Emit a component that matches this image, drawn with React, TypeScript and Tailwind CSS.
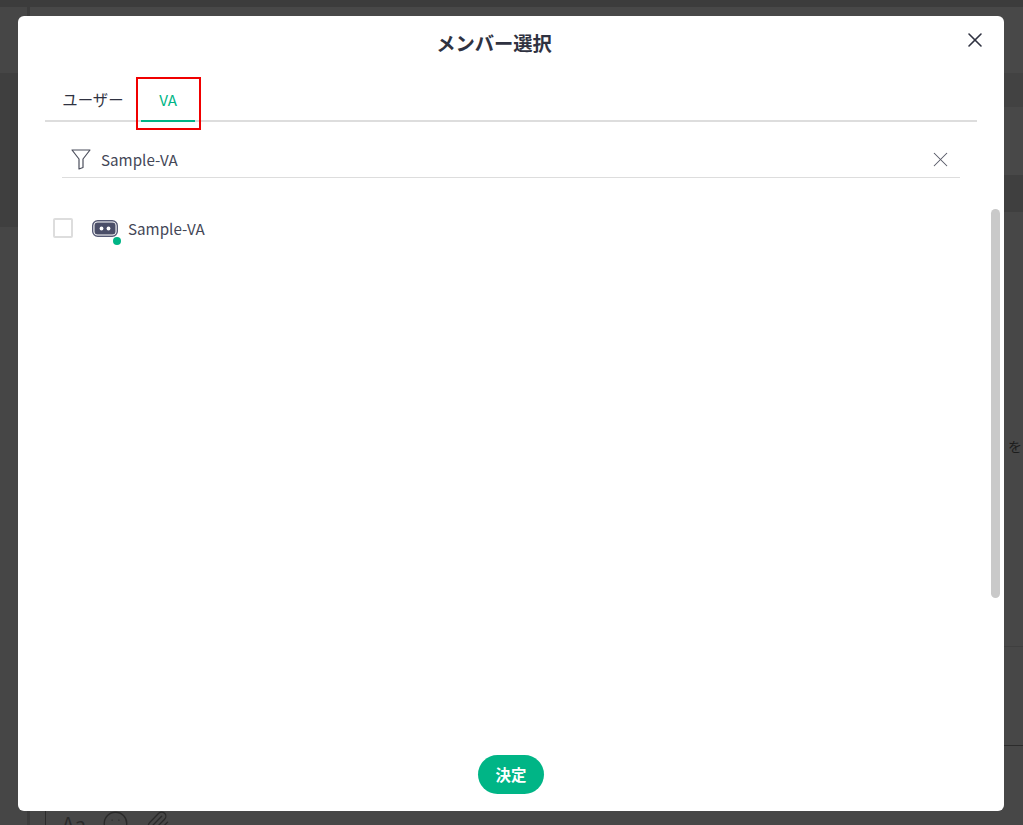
import { Paperclip, Smile, X } from "lucide-react";

const font = `"Noto Sans CJK JP", "Noto Sans", sans-serif`;

function FilterIcon() {
  return (
    <svg width="20" height="21" viewBox="0 0 20 21" fill="none" stroke="#4b4e5c" strokeWidth="1.2">
      <path d="M1 1h18l-7 9v8.5l-4 1.5V10z" strokeLinejoin="round" />
    </svg>
  );
}

function BotIcon() {
  return (
    <div className="relative h-[17px] w-[26px]">
      <svg width="26" height="17" viewBox="0 0 26 17">
        <rect x="0.7" y="0.7" width="24.6" height="15.6" rx="5" fill="#fff" stroke="#565a75" strokeWidth="1.4" />
        <rect x="2.5" y="2.5" width="21" height="12" rx="3" fill="#4a4e68" />
        <circle cx="9.5" cy="8.5" r="1.9" fill="#fff" />
        <circle cx="16.5" cy="8.5" r="1.9" fill="#fff" />
      </svg>
      <span className="absolute left-[21px] top-[17px] h-2 w-2 rounded-full bg-[#00b586]" />
    </div>
  );
}

function PageBehind() {
  return (
    <div className="flex h-[825px] w-full overflow-hidden bg-[#474747]">
      <div className="flex w-[27px] flex-col">
        <div className="h-[7px] bg-[#3c3c3c]" />
        <div className="h-[66px] bg-[#464646]" />
        <div className="h-[154px] bg-[#3f3f3f]" />
        <div className="flex-1 bg-[#464646]" />
      </div>
      <div className="w-[3px] bg-[#3c3c3c]" />
      <div className="flex min-w-0 flex-1 flex-col">
        <div className="h-[7px] shrink-0 bg-[#3c3c3c]" />
        <div className="h-[66px] shrink-0 bg-[#484848]" />
        <div className="h-[35px] shrink-0 border-b border-[#484848] bg-[#424242]" />
        <div className="h-[67px] shrink-0 bg-[#484848]" />
        <div className="h-[37px] shrink-0 bg-[#3f3f3f]" />
        <div className="h-[435px] shrink-0 border-b border-[#3f3f3f] bg-[#474747]" />
        <div className="h-[99px] shrink-0 border-b border-[#2c2c2c] bg-[#474747]" />
        <div className="flex min-h-0 flex-1 items-stretch pl-[15px] text-[#2a2a2a]">
          <span className="w-px bg-[#2c2c2c]" />
          <div className="ml-[16px] mt-[64px] flex shrink-0 items-start">
            <span className="mt-[4px] text-[20px] leading-none">Aa</span>
            <Smile className="ml-[16px] shrink-0" size={27} strokeWidth={1.2} />
            <Paperclip className="ml-[16px] shrink-0" size={25} strokeWidth={1.3} />
          </div>
        </div>
      </div>
    </div>
  );
}

function MemberDialog() {
  return (
    <div className="absolute left-[18px] top-4 flex h-[795px] w-[986px] flex-col rounded-md bg-white text-[#2f3241]">
      <div className="relative flex h-[56px] items-start justify-center pr-[34px] pt-[17px]">
        <h2 className="text-[19.3px] font-bold leading-5">メンバー選択</h2>
        <button type="button" className="absolute right-[17px] top-[12px] text-[#2f3241]">
          <X size={24} strokeWidth={1.6} />
        </button>
      </div>
      <div className="mx-[27px] flex h-[50px] border-b-2 border-[#dddddd]">
        <div className="flex h-[50px] w-[96px] items-center justify-center pt-[6px] text-[15.4px]">ユーザー</div>
        <div className="relative flex h-[50px] w-[54px] items-center justify-center pt-[4px] text-[15.2px] text-[#00b586]">
          VA
          <span className="absolute bottom-0 left-0 h-0.5 w-full bg-[#00b586]" />
          <span className="absolute -left-[5px] top-[5px] h-[53px] w-[65px] border-2 border-[#f00000]" />
        </div>
      </div>
      <div className="relative flex min-h-0 flex-1 flex-col">
        <div className="mx-[44px] mt-[14px] flex h-[42px] items-center border-b border-[#dddddd] pt-[6px]">
          <div className="ml-[9px] mr-[10px]">
            <FilterIcon />
          </div>
          <span className="flex-1 text-[15.2px] text-[#444757]">Sample-VA</span>
          <button type="button" className="mr-[7px] text-[#555866]">
            <X size={25} strokeWidth={1} />
          </button>
        </div>
        <div className="ml-[35px] mt-[30px] flex h-[40px] items-center">
          <div className="h-5 w-5 rounded-[2px] border-2 border-[#dddddd]" />
          <div className="ml-[19px] mr-[10px]">
            <BotIcon />
          </div>
          <span className="text-[15.2px] text-[#444757]">Sample-VA</span>
        </div>
        <div className="absolute right-[4px] top-[87px] h-[389px] w-[9px] rounded-full bg-[#c9c9c9]" />
      </div>
      <div className="flex h-[56px] items-start justify-center">
        <button type="button" className="h-[39px] w-[66px] rounded-full bg-[#00b586] text-[15.4px] font-bold text-white">
          決定
        </button>
      </div>
    </div>
  );
}

export default function App() {
  return (
    <div className="relative h-[825px] w-full overflow-hidden" style={{ fontFamily: font }}>
      <PageBehind />
      <MemberDialog />
      <span className="absolute left-[1008px] top-[436px] text-[14px] text-[#1c1c1c]">を</span>
    </div>
  );
}
